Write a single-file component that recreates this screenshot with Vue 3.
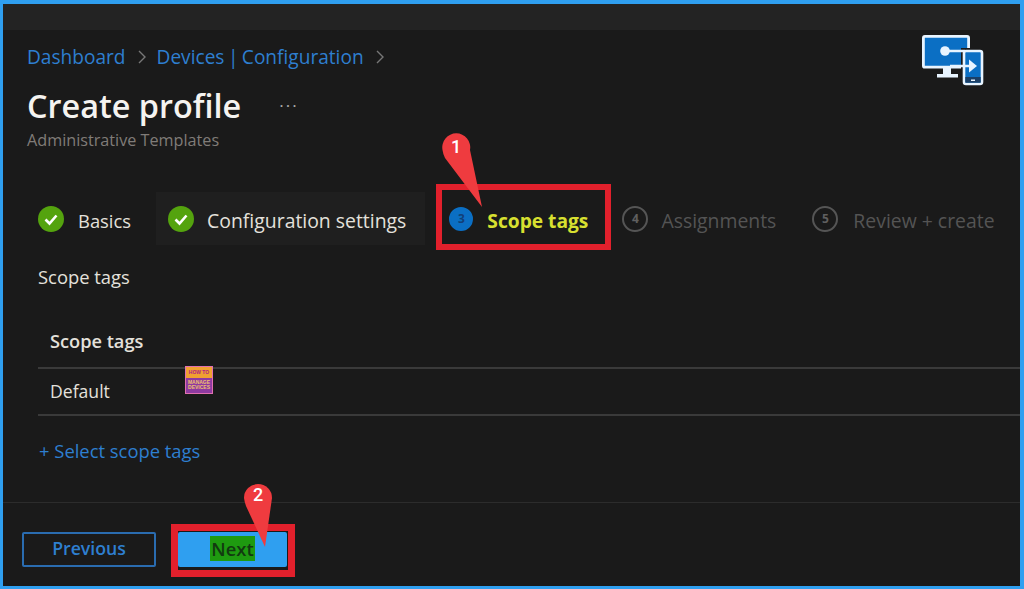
<template>
  <div class="frame">
    <div class="topbar"></div>
    <header class="head">
      <nav class="crumbs">
        <a>Dashboard</a>
        <svg class="chev" viewBox="0 0 10 16"><path d="M2 2l6 6-6 6" /></svg>
        <a class="tight">Devices | Configuration</a>
        <svg class="chev" viewBox="0 0 10 16"><path d="M2 2l6 6-6 6" /></svg>
      </nav>
      <div class="title-row">
        <h1>Create profile</h1>
        <span class="more">...</span>
      </div>
      <p class="sub">Administrative Templates</p>
    </header>

    <div class="tabs">
      <div v-for="step in steps" :key="step.label" class="tab" :class="step.cls">
        <svg v-if="step.done" class="check" viewBox="0 0 26 26">
          <circle cx="13" cy="13" r="13" fill="#54a30e" />
          <path d="M7.5 13.5l4 4 7-8" fill="none" stroke="#fff" stroke-width="2.6" />
        </svg>
        <span v-else class="num">{{ step.num }}</span>
        <span class="tab-label">{{ step.label }}</span>
      </div>
    </div>

    <p class="section-label">Scope tags</p>

    <div class="table">
      <div class="row th">Scope tags</div>
      <div class="row td">
        Default
        <div class="stamp">
          <span class="stamp-top">HOW TO</span>
          <span class="stamp-bot">MANAGE DEVICES</span>
        </div>
      </div>
    </div>

    <a class="add">+ Select scope tags</a>

    <footer class="foot">
      <button class="btn prev">Previous</button>
      <button class="btn next"><span class="next-mark">Next</span></button>
    </footer>

    <!-- annotations on top of the screenshot -->
    <div class="box box-tab"></div>
    <div class="box box-next"></div>
    <svg class="pin pin-one" viewBox="0 0 46 80">
      <path d="M2.5 20A14 14 0 1 1 30 20L42 77 5 28Q3 24 2.5 20Z" fill="#ef3b3f" />
      <text x="16" y="23" text-anchor="middle">1</text>
    </svg>
    <svg class="pin pin-two" viewBox="0 0 46 80">
      <path d="M4 20A14 14 0 1 1 32 20L25 69 6 28Q4.500 24 4 20Z" fill="#ef3b3f" />
      <text x="18" y="23" text-anchor="middle">2</text>
    </svg>
    <svg class="logo" viewBox="918 30 68 58">
      <rect x="923.400" y="36.400" width="45.200" height="30.800" rx="1.500" fill="#0b6fc4" stroke="#e8f4ff" stroke-width="2.800" />
      <path d="M943 68h8v7h-8zM937 74h21v3.500h-21z" fill="#e8f4ff" />
      <rect x="961" y="48" width="24" height="39" fill="#1a1a1a" />
      <rect x="964" y="51" width="18" height="33" rx="2" fill="#0b6fc4" stroke="#e8f4ff" stroke-width="2.600" />
      <rect x="965.300" y="77" width="15.400" height="5.700" fill="#1b3f66" />
      <rect x="971" y="79.500" width="4" height="1.500" fill="#e8f4ff" />
      <circle cx="945" cy="51" r="4.800" fill="#e8f4ff" />
      <path d="M945 51h20M950 66h20" stroke="#e8f4ff" stroke-width="2.600" fill="none" />
      <path d="M969 59.500l8 6.500-8 6.500z" fill="#e8f4ff" />
    </svg>
  </div>
</template>

<script setup>
const steps = [
  { num: 1, label: 'Basics', done: true, cls: 'basics' },
  { num: 2, label: 'Configuration settings', done: true, cls: 'current' },
  { num: 3, label: 'Scope tags', cls: 'active' },
  { num: 4, label: 'Assignments', cls: 'todo four' },
  { num: 5, label: 'Review + create', cls: 'todo five' },
];
</script>

<style>
html,
body {
  margin: 0;
  background: #1a1a1a;
}
</style>

<style scoped>
.frame {
  position: relative;
  box-sizing: border-box;
  width: 1024px;
  height: 589px;
  display: flex;
  flex-direction: column;
  overflow: hidden;
  background: #1a1a1a;
  border: solid #2f9ff0;
  border-width: 4px 4px 3px 3px;
  font-family: "Open Sans", "Noto Sans", sans-serif;
  color: #e4e1dc;
}

.topbar {
  height: 26px;
  flex: none;
  background: #232323;
}

.head {
  padding: 14px 0 0 24px;
}

.crumbs {
  display: flex;
  align-items: center;
  gap: 11px;
  height: 26px;
  font-size: 19.1px;
  color: #2e7fd0;
}

.tight {
  margin-left: -1px;
  word-spacing: -1.5px;
}

.chev {
  width: 10px;
  height: 16px;
}

.chev path {
  fill: none;
  stroke: #777;
  stroke-width: 1.4;
}

.title-row {
  display: flex;
  align-items: center;
  gap: 38px;
  margin-top: 13px;
  height: 44px;
}

h1 {
  margin: 0;
  font-size: 32.4px;
  font-weight: 600;
  color: #f5f3f0;
}

.more {
  font-size: 17px;
  line-height: 1;
  letter-spacing: 2px;
  margin-bottom: 10px;
  color: #aaa;
}

.sub {
  margin: 2px 0 0;
  font-size: 16.2px;
  line-height: 22px;
  color: #807c78;
}

.tabs {
  display: flex;
  align-items: stretch;
  height: 53px;
  margin-top: 41px;
  padding-left: 22px;
}

.tab {
  display: flex;
  align-items: center;
  gap: 14px;
  padding: 0 13px;
  font-size: 19.4px;
  white-space: nowrap;
}

.tab-label {
  margin-top: 3px;
}

.basics .tab-label {
  font-size: 18.4px;
}

.current {
  background: #1f1f1f;
  margin-left: 12px;
  padding: 0 19px 0 12px;
  gap: 13px;
}

.check {
  width: 26px;
  height: 26px;
  flex: none;
}

.num {
  box-sizing: border-box;
  width: 26px;
  height: 26px;
  flex: none;
  display: flex;
  align-items: center;
  justify-content: center;
  border-radius: 50%;
  border: 2px solid #555;
  font-size: 12px;
  font-weight: 700;
  color: #5f5f5f;
}

.active {
  margin-left: 11px;
}

.active .num {
  width: 24px;
  height: 24px;
  background: #0b6fc4;
  border-color: #0b6fc4;
  color: #123f78;
}

.active .tab-label {
  font-size: 19.2px;
  font-weight: 700;
  color: #d8e030;
}

.four {
  margin-left: 8px;
  gap: 13px;
}

.five {
  margin-left: 10px;
  gap: 15px;
}

.todo .tab-label {
  color: #545454;
}

.section-label {
  margin: 20px 0 0 35px;
  font-size: 18.4px;
  line-height: 24px;
}

.table {
  margin: 29px 0 0 35px;
}

.row {
  position: relative;
  padding-left: 12px;
}

.th {
  height: 49px;
  line-height: 47px;
  font-size: 18.2px;
  font-weight: 600;
  border-bottom: 2px solid #3a3a3a;
}

.td {
  height: 45px;
  line-height: 45px;
  font-size: 17.6px;
  border-bottom: 2px solid #3a3a3a;
}

.stamp {
  position: absolute;
  left: 147px;
  top: -3px;
  width: 28px;
  height: 28px;
  display: flex;
  flex-direction: column;
  box-sizing: border-box;
  border: 1px solid #e070b0;
  font-family: "Liberation Sans", sans-serif;
  font-weight: 700;
  font-size: 5px;
  line-height: 1;
  text-align: center;
  overflow: hidden;
}

.stamp-top {
  height: 11px;
  line-height: 11px;
  background: #f0a030;
  color: #b01e80;
}

.stamp-bot {
  flex: 1;
  padding-top: 2px;
  background: #8e3aa0;
  color: #f0c070;
}

.add {
  display: block;
  margin: 23px 0 0 36px;
  font-size: 18.4px;
  line-height: 24px;
  color: #2e7fd0;
}

.foot {
  display: flex;
  gap: 22px;
  margin-top: 39px;
  padding: 29px 0 0 19px;
  border-top: 1px solid #2c2c2c;
}

.btn {
  box-sizing: border-box;
  height: 35px;
  padding-bottom: 4px;
  border-radius: 2px;
  font-family: inherit;
  font-weight: 600;
}

.prev {
  width: 134px;
  font-size: 17.7px;
  background: transparent;
  border: 2px solid #2a6cb0;
  color: #2e7fd0;
}

.next {
  width: 109px;
  font-size: 18.4px;
  background: #2f9ff0;
  border: 0;
  color: #123a10;
}

.next-mark {
  background: #1e9a10;
  padding: 0 1px;
}

.box {
  position: absolute;
  box-sizing: border-box;
  border: 6px solid #e2202c;
}

.box-tab {
  left: 433px;
  top: 180px;
  width: 175px;
  height: 66px;
}

.box-next {
  left: 168px;
  top: 520px;
  width: 124px;
  height: 53px;
  border-width: 7px;
}

.pin {
  position: absolute;
  width: 46px;
  height: 80px;
}

.pin text {
  font-family: "Roboto", sans-serif;
  font-size: 18px;
  font-weight: 500;
  fill: #fff;
}

.pin-one {
  left: 437px;
  top: 126px;
}

.pin-two {
  left: 237px;
  top: 474px;
}

.logo {
  position: absolute;
  left: 915px;
  top: 26px;
  width: 68px;
  height: 58px;
}
</style>
